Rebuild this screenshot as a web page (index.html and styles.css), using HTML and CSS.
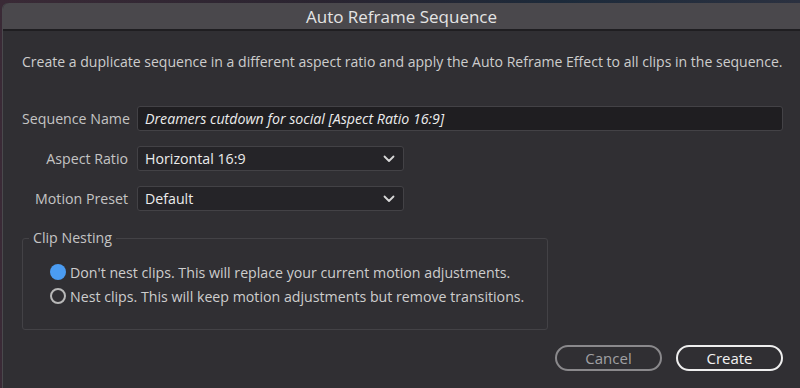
FILE: index.html
```html
<!DOCTYPE html>
<html>
<head>
<meta charset="utf-8">
<link rel="stylesheet" href="styles.css">
</head>
<body>
<div class="dialog">
  <div class="titlebar">Auto Reframe Sequence</div>
  <div class="content">
    <p class="desc">Create a duplicate sequence in a different aspect ratio and apply the Auto Reframe Effect to all clips in the sequence.</p>
    <div class="form">
      <div class="row">
        <span class="label">Sequence Name</span>
        <div class="input">Dreamers cutdown for social [Aspect Ratio 16:9]</div>
      </div>
      <div class="row">
        <span class="label">Aspect Ratio</span>
        <div class="select"><span>Horizontal 16:9</span>
          <svg class="chev" width="12" height="8" viewBox="0 0 12 8"><path d="M1.5 1.5 L6 6 L10.5 1.5" fill="none" stroke="#d8d8d8" stroke-width="1.8" stroke-linecap="round" stroke-linejoin="round"/></svg>
        </div>
      </div>
      <div class="row">
        <span class="label">Motion Preset</span>
        <div class="select"><span>Default</span>
          <svg class="chev" width="12" height="8" viewBox="0 0 12 8"><path d="M1.5 1.5 L6 6 L10.5 1.5" fill="none" stroke="#d8d8d8" stroke-width="1.8" stroke-linecap="round" stroke-linejoin="round"/></svg>
        </div>
      </div>
    </div>
    <div class="fieldset">
      <div class="legend">Clip Nesting</div>
      <div class="radio"><span class="dot on"></span><span>Don't nest clips. This will replace your current motion adjustments.</span></div>
      <div class="radio"><span class="dot"></span><span>Nest clips. This will keep motion adjustments but remove transitions.</span></div>
    </div>
    <div class="buttons">
      <div class="btn cancel">Cancel</div>
      <div class="btn create">Create</div>
    </div>
  </div>
</div>
</body>
</html>
```
FILE: styles.css
```css
html, body {
  margin: 0;
  padding: 0;
  width: 800px;
  height: 388px;
  overflow: hidden;
  background: linear-gradient(90deg, #3a2a36 0%, #2a2430 40%, #1c2a3a 70%, #2b3140 100%);
  font-family: "Open Sans", "Noto Sans", sans-serif;
}
.dialog {
  margin: 3px 0 0 2px;
  height: 385px;
  background: #302f33;
  border-top-left-radius: 6px;
  border-left: 1px solid #4a494d;
  box-sizing: border-box;
}
.titlebar {
  height: 26px;
  background: #4a484c;
  border-top-left-radius: 6px;
  border-bottom: 2px solid #1f1e21;
  color: #e4e4e4;
  font-size: 17px;
  line-height: 27px;
  text-align: center;
}
.content {
  padding: 0 17px 0 19px;
}
.desc {
  margin: 0;
  padding-top: 21px;
  height: 22px;
  line-height: 20px;
  font-size: 14.05px;
  color: #cdcdcd;
  white-space: nowrap;
}
.form {
  margin-top: 32px;
  display: flex;
  flex-direction: column;
  gap: 15px;
}
.row {
  display: flex;
  align-items: center;
  height: 25px;
}
.label {
  width: 106px;
  text-align: right;
  font-size: 14.2px;
  color: #c4c4c4;
  margin-right: 9px;
  white-space: nowrap;
}
.input, .select {
  height: 25px;
  box-sizing: border-box;
  background: #1f1e21;
  border: 1px solid #434246;
  border-radius: 3px;
  color: #ececec;
  font-size: 14.2px;
  line-height: 23px;
  padding-left: 7px;
}
.input {
  flex: 1;
  font-style: italic;
}
.select {
  width: 267px;
  display: flex;
  justify-content: space-between;
  align-items: center;
  padding-right: 8px;
  background: #252428;
}
.chev { display: block; }
.fieldset {
  margin: 27px 0 0 0;
  width: 526px;
  height: 92px;
  box-sizing: border-box;
  border: 1px solid #434246;
  border-radius: 3px;
  position: relative;
  padding: 21px 0 0 27px;
}
.legend {
  position: absolute;
  top: -11px;
  left: 6px;
  padding: 0 4px;
  background: #302f33;
  color: #c4c4c4;
  font-size: 14.2px;
  line-height: 20px;
}
.radio {
  display: flex;
  align-items: center;
  gap: 4px;
  height: 24px;
  font-size: 14.2px;
  color: #cdcdcd;
  white-space: nowrap;
}
.dot {
  width: 16px;
  height: 16px;
  box-sizing: border-box;
  border-radius: 50%;
  border: 2px solid #b8b8b8;
  flex: none;
}
.dot.on {
  border: none;
  background: #4b9cf2;
}
.buttons {
  display: flex;
  justify-content: flex-end;
  gap: 14px;
  margin-top: 15px;
}
.btn {
  width: 107px;
  height: 26px;
  box-sizing: border-box;
  border-radius: 13px;
  text-align: center;
  font-size: 15px;
  line-height: 22px;
}
.cancel {
  border: 2px solid #8a898c;
  color: #a0a0a3;
}
.create {
  border: 2px solid #efefef;
  color: #f2f2f2;
}
```
